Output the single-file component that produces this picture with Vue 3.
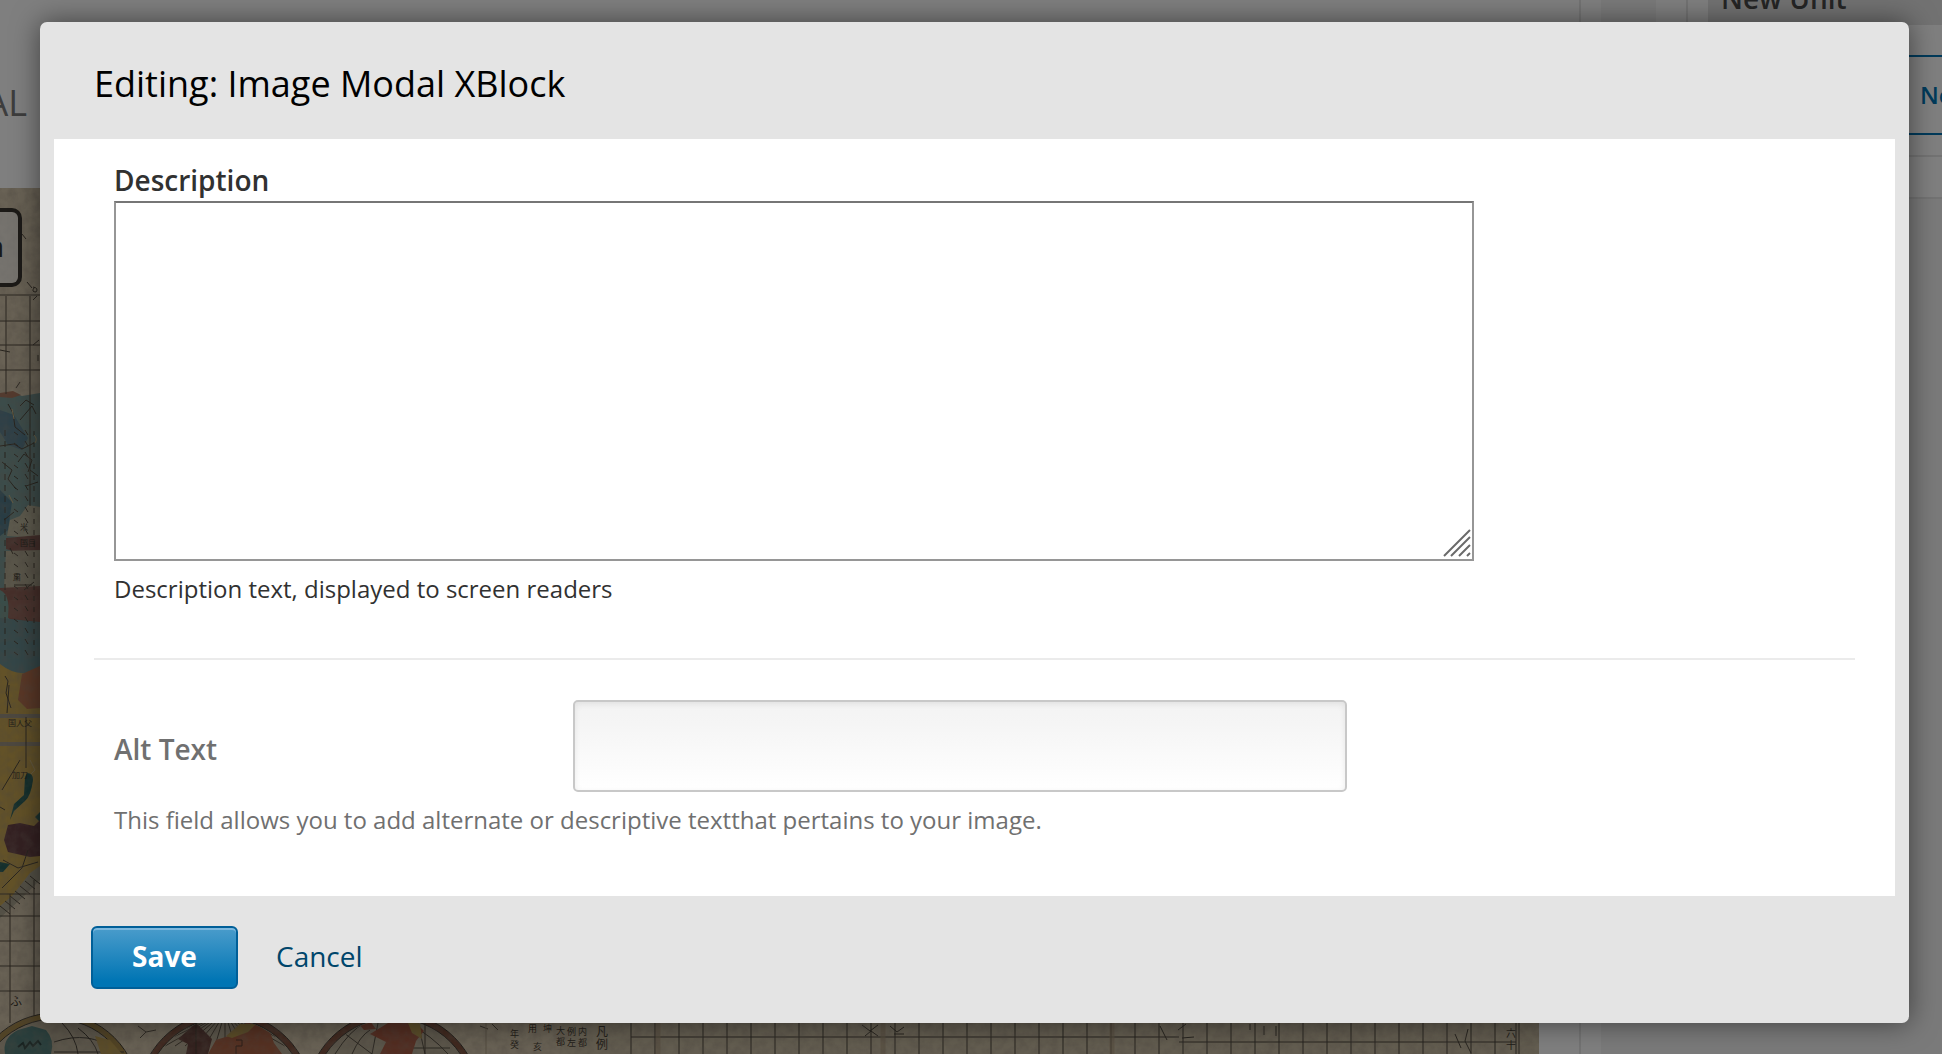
<script setup>
import { ref } from 'vue'

const description = ref('')
const altText = ref('')

const range = (start, end, step) => {
  const out = []
  for (let v = start; v <= end; v += step) out.push(v)
  return out
}

const lowerMeridians = range(631, 1519, 24)
const upperParallels = [295, 321, 345, 370]
const southParallels = [894, 916, 941, 966, 991]
const spokes = range(-80, 80, 10)
const inkMarks = range(430, 650, 11)
const hatching = range(0, 30, 5)
</script>

<template>
  <div class="app">
    <div class="page" aria-hidden="true">
      <div class="main">
        <div class="page-title"><span>AL</span></div>
        <div class="map-frame">
          <svg class="map" viewBox="0 188 1539 866" preserveAspectRatio="xMinYMin slice">
            <defs>
              <filter id="paper" x="0" y="0" width="100%" height="100%">
                <feTurbulence type="fractalNoise" baseFrequency="0.12" numOctaves="4" seed="4" />
                <feColorMatrix values="0 0 0 0 .3  0 0 0 0 .25  0 0 0 0 .2  .6 0 0 0 -.2" />
              </filter>
              <clipPath id="globe2"><circle cx="225" cy="1099" r="80" /></clipPath>
              <clipPath id="globe3"><circle cx="393" cy="1099" r="80" /></clipPath>
            </defs>
            <rect y="188" width="1539" height="866" fill="#d2c4aa" />
            <rect y="1000" x="560" width="979" height="54" fill="#c8bca2" />

            <!-- western coast -->
            <path d="M0 394 L12 392 22 396 40 393 V622 H0Z" fill="#789894" />
            <path d="M0 410 L14 415 28 438 22 450 8 445 0 432Z" fill="#5b8090" />
            <path d="M0 490 L12 502 8 530 0 536Z" fill="#4f7888" />
            <path d="M0 393 L13 391 21 395 12 398 0 397Z" fill="#a8745c" />
            <path d="M40 507 L28 505 20 516 10 520 7 536 40 538Z" fill="#bdb79d" />
            <path d="M6 538 L40 535 V552 L20 553 6 549Z" fill="#865c54" />
            <path d="M6 551 L40 550 V588 H4Z" fill="#b4ac94" />
            <path d="M0 588 L40 586 V625 H0Z" fill="#8d5e54" />
            <path d="M0 590 Q11 594 9 625 H0Z" fill="#739a92" />
            <path d="M9 600 H40 V622 L8 618Z" fill="#94655a" />
            <path d="M0 660 H40 V868 L0 910Z" fill="#c6a450" />
            <path d="M0 618 L40 622 V668 Q20 680 0 664Z" fill="#688c90" />
            <path d="M22 674 L40 666 V708 L27 709 18 700Z" fill="#b6704e" />
            <path d="M0 716 H40 M0 744 H40" stroke="#9c9280" stroke-width="4" />
            <path d="M27 773 Q33 773 33 780 Q31 796 25 801 L14 811 10 820 14 804 24 795 25 777Z" fill="#285f59" />
            <path d="M40 812 L35 817 40 822Z M0 862 L10 864 3 872 0 872Z" fill="#285f59" />
            <path d="M8 825 L20 823 34 826 40 820 V856 L30 857 8 852 4 840Z" fill="#694245" />
            <path d="M40 866 L30 873 12 896 0 906 V918 L24 896 40 880Z" fill="#a9a38e" />

            <!-- graticule and rivers -->
            <g fill="none" stroke="#4e463a" stroke-width="1">
              <path d="M6 296 V394 M30 296 V506 M10 894 V1023 M34 880 V1023 M26 717 V768" />
              <path v-for="y in upperParallels" :key="'u' + y" :d="`M0 ${y} H40`" />
              <path v-for="y in southParallels" :key="'s' + y" :d="`M0 ${y} H40`" />
              <path d="M22 234 l4 5 M33 287 q6 1 3 5 q-5 0 -2 -4 M27 282 l5 6 M33 300 l4 -4 M33 345 l6 -5 M0 350 l10 2 M38 355 v6" />
              <path d="M16 388 l4 -6 M20 406 l6 -6 8 5 M8 404 l5 9 2 14 10 8 M20 420 l12 -14 4 8 M0 446 l14 -2 8 5 12 -6 M2 462 l10 8 -4 9 8 10 M18 462 l6 -8 8 6 -4 12 M30 470 l8 6 M26 486 l12 -4 M4 520 l10 -8 M10 548 l3 6 M14 585 h18 M24 590 l10 -8" />
              <path v-for="y in inkMarks" :key="'i' + y" :d="`M5 ${y} v6 M14 ${y + 2} l4 3 M25 ${y} l3 5 M34 ${y + 1} v5`" />
              <path d="M5 676 l3 5 -2 12 5 15 M9 685 l-2 28 M20 760 l-18 30 M0 807 l5 3 M3 860 l15 8 20 -6 M28 850 l-6 18 -20 20" />
              <path v-for="n in hatching" :key="'h' + n" :d="`M${n} ${906 - n} l10 8`" />
            </g>
            <g fill="none" stroke="#c9b584">
              <path d="M12 409 l2 10 M9 495 l4 8 M34 435 q4 4 1 8 M30 760 l5 10 -4 4" />
            </g>
            <g class="ink" font-size="8">
              <text x="8" y="726">国人父</text>
              <text x="12" y="778">加刀</text>
              <text x="20" y="530">米</text>
              <text x="20" y="546">国目</text>
              <text x="13" y="580">粛</text>
              <text x="10" y="1006" font-size="12">ふ</text>
            </g>

            <!-- hemispheres -->
            <g fill="#b8ad96" stroke="#6e513b" stroke-width="6">
              <circle cx="55" cy="1097" r="81" stroke="#a38648" />
              <circle cx="225" cy="1099" r="84" stroke="#80523f" />
              <circle cx="393" cy="1099" r="84" stroke="#80523f" />
            </g>
            <g fill="none" stroke="#423d35">
              <circle cx="55" cy="1097" r="84" /><circle cx="55" cy="1097" r="78" />
              <circle cx="225" cy="1099" r="87" /><circle cx="225" cy="1099" r="81" />
              <circle cx="393" cy="1099" r="87" /><circle cx="393" cy="1099" r="81" />
              <path d="M62 1023 Q76 1037 78 1054 M78 1028 Q94 1040 98 1054 M54 1042 Q90 1030 114 1050 M54 1052 H124" />
            </g>
            <path d="M5 1054 Q2 1038 18 1030 L32 1026 46 1030 Q55 1040 51 1054Z" fill="#547d78" />
            <path d="M95 1036 L110 1040 122 1054 H101Z" fill="#b89a51" />
            <path d="M18 1047 l5 -4 2 5 5 -6 3 4 5 -5 3 4" fill="none" stroke="#2d4340" stroke-width="2" />
            <g clip-path="url(#globe2)">
              <g stroke="#5a5143"><path v-for="s in spokes" :key="'a' + s" :d="`M225 1012 L${225 + s} 1046`" /></g>
              <path d="M196 1023 l16 16 -4 15 -22 0 2 -10 -10 -5Z" fill="#69453e" />
              <path d="M208 1054 L216 1040 238 1033 248 1020 270 1032 274 1043 282 1054Z" fill="#ab6245" />
              <path d="M226 1036 l14 -12 16 0 -8 8 -16 6Z" fill="#b79950" />
              <path d="M236 1040 h6 v6 h-6 v8" fill="none" stroke="#55392e" />
            </g>
            <g clip-path="url(#globe3)">
              <path d="M335 1054 Q350 1030 365 1023 M352 1054 Q360 1036 370 1030 M372 1054 L378 1023 M340 1030 L372 1054 M408 1023 Q432 1036 448 1054 M418 1023 L425 1054 M412 1048 H450" fill="none" stroke="#514a3f" />
              <path d="M370 1034 L388 1023 H416 L424 1031 416 1041 412 1054 H380 L386 1042Z M358 1023 l12 -2 6 8 -12 1Z" fill="#a75a43" />
              <path d="M408 1023 h12 l2 16 -10 -6Z" fill="#b79b52" />
            </g>
            <path d="M196 1015 V1054 M425 1020 V1054" stroke="#4b4035" />
            <path d="M138 1026 l8 6 10 -2 M140 1038 l6 -6 M480 1026 l8 3 M492 1024 l6 6" fill="none" stroke="#5a5143" />

            <!-- legend -->
            <g class="ink" font-size="9">
              <text x="510" y="1037">年</text><text x="510" y="1048">癸</text>
              <text x="528" y="1032">用</text><text x="533" y="1050">亥</text><text x="543" y="1032">坤</text>
              <text x="556" y="1034">大</text><text x="556" y="1045">都</text>
              <text x="567" y="1035">例</text><text x="567" y="1046">左</text>
              <text x="578" y="1035">内</text><text x="578" y="1046">都</text>
            </g>
            <g class="ink" font-size="12">
              <text x="596" y="1036">凡</text><text x="596" y="1049">例</text>
              <text x="1506" y="1037" font-size="10">六</text><text x="1506" y="1049" font-size="10">十</text>
            </g>
            <g fill="none" stroke="#4b453b">
              <path v-for="x in lowerMeridians" :key="x" :d="`M${x} 1010 V1054`" />
              <path d="M631 1037 H1179 M1179 1042 H1516 M1516 1010 V1054" />
              <path d="M862 1025 l8 6 8 -6 M865 1036 l6 -5 7 5 M890 1026 l7 6 7 -5 M894 1034 h10 M1178 1030 l8 -6 M1182 1038 l12 -1 M1250 1024 v6 M1264 1026 v9 M1276 1026 v10 M1455 1034 l6 14 M1468 1029 l-3 12 6 12 M1160 1026 l7 14" />
            </g>
            <path d="M486 1020 V1054" stroke="#a89a80" />
            <path d="M883 1010 V1054 M1112 1010 V1054 M658 1010 V1054" stroke="#ad997c" stroke-width="5" opacity=".6" />
            <rect y="188" width="1539" height="866" filter="url(#paper)" />
          </svg>
          <div class="map-button"><span>n</span></div>
        </div>
      </div>
      <div class="sidebar">
        <div class="outline">
          <div class="outline-inner">
            <div class="unit-heading">New Unit</div>
            <div class="unit-action">New</div>
          </div>
        </div>
      </div>
    </div>

    <div class="overlay">
      <form class="modal" role="dialog" aria-labelledby="modal-title" @submit.prevent>
        <header class="modal-header">
          <h2 id="modal-title">Editing: Image Modal XBlock</h2>
        </header>
        <div class="modal-body">
          <section class="field field-description">
            <label for="description">Description</label>
            <div class="textarea-wrap">
              <textarea id="description" v-model="description" aria-describedby="description-help"></textarea>
              <svg class="grip" width="28" height="28" viewBox="0 0 28 28" aria-hidden="true">
                <path d="M1 27 L27 1 M8 27 L27 8 M16 27 L27 16 M24 27 L27 24" />
              </svg>
            </div>
            <p id="description-help">Description text, displayed to screen readers</p>
          </section>
          <section class="field field-alt">
            <div class="field-row">
              <label for="alt-text">Alt Text</label>
              <input id="alt-text" v-model="altText" type="text" aria-describedby="alt-help" />
            </div>
            <p id="alt-help">This field allows you to add alternate or descriptive textthat pertains to your image.</p>
          </section>
        </div>
        <footer class="modal-footer">
          <button type="submit" class="save">Save</button>
          <a href="#" class="cancel" @click.prevent>Cancel</a>
        </footer>
      </form>
    </div>
  </div>
</template>

<style>
body {
  margin: 0;
}
</style>

<style scoped>
* {
  box-sizing: border-box;
}

.app {
  position: relative;
  min-height: 100vh;
  overflow: hidden;
  font-family: "Open Sans", "Noto Sans CJK JP", sans-serif;
}

.page {
  position: absolute;
  inset: 0;
  display: flex;
  overflow: hidden;
  background: #fff;
}

.main {
  flex: 1;
  min-width: 0;
  display: flex;
  flex-direction: column;
  margin-right: 20px;
  padding-right: 40px;
  border-right: 2px solid #e6e6e6;
}

.page-title {
  display: flex;
  justify-content: flex-end;
  width: 27px;
  height: 188px;
  padding-top: 79px;
  font-size: 36px;
  line-height: 48px;
  color: #7a7a7a;
  white-space: nowrap;
}

.map-frame {
  position: relative;
  flex: 1;
  min-height: 0;
}

.map {
  display: block;
  width: 100%;
  height: 100%;
}

.ink {
  fill: #3f392f;
  font-family: "Noto Sans CJK JP", sans-serif;
}

.map-button {
  position: absolute;
  top: 20px;
  left: 0;
  display: flex;
  justify-content: flex-end;
  align-items: center;
  width: 22px;
  height: 79px;
  padding: 0 14px 4px 0;
  border: 4px solid #38352e;
  border-left: 0;
  border-radius: 0 10px 10px 0;
  background: #fff9;
  font-size: 28px;
  font-weight: 600;
  color: #333;
  white-space: nowrap;
}

.sidebar {
  width: 341px;
  padding-left: 55px;
  background: #f4f4f4;
}

.outline {
  height: 199px;
  padding-left: 30px;
  border-bottom: 2px solid #e6e6e6;
  background: #fff;
}

.outline-inner {
  height: 157px;
  padding-left: 20px;
  border-left: 2px solid #e6e6e6;
  border-bottom: 2px solid #e6e6e6;
  overflow: hidden;
}

.unit-heading {
  display: flex;
  align-items: flex-end;
  height: 25px;
  padding: 0 0 8px 13px;
  background: #e5e5e5;
  font-size: 28px;
  font-weight: 600;
  line-height: 38px;
  color: #4a4a4a;
}

.unit-action {
  height: 80px;
  margin-top: 30px;
  padding-left: 210px;
  border: 2px solid #0075b4;
  border-right: 0;
  font-size: 24px;
  font-weight: 600;
  line-height: 76px;
  color: #0075b4;
  white-space: nowrap;
}

.overlay {
  position: relative;
  min-height: 100vh;
  padding: 22px 33px 31px 40px;
  background: rgba(0, 0, 0, 0.5);
}

.modal {
  border-radius: 7px;
  background: #e4e4e4;
  box-shadow: 0 0 28px rgba(0, 0, 0, 0.5);
}

.modal-header {
  padding: 38px 54px 31px;
}

h2 {
  margin: 0;
  font-size: 36px;
  font-weight: 400;
  line-height: 48px;
  color: #000;
}

.modal-body {
  margin: 0 14px;
  padding: 0 40px;
  background: #fff;
}

.field {
  padding: 0 20px;
}

.field-description {
  padding-top: 23px;
  padding-bottom: 53px;
  border-bottom: 2px solid #ebebeb;
  color: #313131;
}

.field-alt {
  padding-top: 40px;
  padding-bottom: 60px;
  color: #707070;
}

label {
  display: block;
  font-size: 28px;
  font-weight: 600;
  line-height: 36px;
}

.textarea-wrap {
  position: relative;
  width: 79%;
  margin-top: 3px;
}

textarea {
  display: block;
  width: 100%;
  height: 360px;
  padding: 8px;
  border: 2px solid #969696;
  border-top-color: #767676;
  border-radius: 0;
  background: #fff;
  font: 24px/32px "Open Sans", sans-serif;
  resize: none;
}

.grip {
  position: absolute;
  right: 3px;
  bottom: 4px;
  fill: none;
  stroke: #6a6a6a;
  stroke-width: 2;
}

p {
  margin: 12px 0 0;
  font-size: 24px;
  line-height: 32px;
}

.field-row {
  display: flex;
  align-items: center;
}

.field-row label {
  width: 459px;
  padding-top: 6px;
}

input {
  width: 45%;
  height: 92px;
  padding: 0 20px;
  border: 2px solid #c8c8c8;
  border-radius: 5px;
  background: linear-gradient(#f3f3f3, #f5f5f5 25%, #fff);
  box-shadow: inset 0 2px 6px rgba(0, 0, 0, 0.08);
  font: 28px/36px "Open Sans", sans-serif;
}

.modal-footer {
  display: flex;
  align-items: center;
  gap: 38px;
  padding: 30px 51px 34px;
}

.save {
  width: 147px;
  height: 63px;
  padding: 0 0 4px;
  border: 2px solid #005f98;
  border-radius: 6px;
  background: linear-gradient(#4a9ccb, #0075b4 90%);
  box-shadow: inset 0 2px 0 #7db8de;
  font: 700 28px/36px "Open Sans", sans-serif;
  color: #fff;
}

.cancel {
  padding-bottom: 4px;
  font-size: 28px;
  line-height: 36px;
  color: #00466b;
  text-decoration: none;
}
</style>
